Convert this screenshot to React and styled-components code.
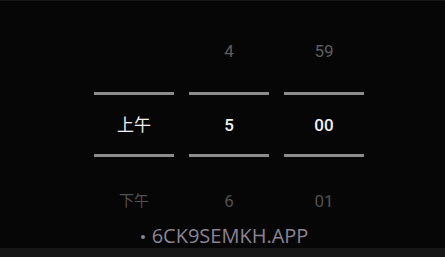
import React from 'react'
import styled, { createGlobalStyle } from 'styled-components'

const GlobalStyle = createGlobalStyle`
  html, body {
    margin: 0;
    padding: 0;
    background: #060606;
  }
`

const Page = styled.div`
  width: 445px;
  height: 257px;
  display: flex;
  flex-direction: column;
  background: #060606;
  overflow: hidden;
`

const TopEdge = styled.div`
  height: 1px;
  background: #171717;
`

const Picker = styled.div`
  display: flex;
  justify-content: center;
  gap: 15px;
  padding-left: 13px;
`

const Column = styled.div`
  width: 80px;
  display: flex;
  flex-direction: column;
  align-items: center;
`

const Cell = styled.div`
  height: 30px;
  line-height: 30px;
  font-family: Roboto, "Noto Sans CJK SC", sans-serif;
  font-size: ${(p) => (p.$cjk && !p.$active ? '15px' : '17px')};
  font-weight: ${(p) => (p.$active && !p.$cjk ? 500 : 400)};
  color: ${(p) => (p.$active ? '#f0f0f0' : p.$dim ? '#515151' : '#5e5e5e')};
`

const Divider = styled.div`
  width: 80px;
  height: 3px;
  background: #8c8c8c;
`

const Caption = styled.div`
  margin-top: 10px;
  height: 20px;
  line-height: 20px;
  display: flex;
  justify-content: center;
  align-items: center;
  gap: 7px;
  padding-left: 4px;
  font-family: "Open Sans", sans-serif;
  font-size: 20px;
  color: #8a8394;
`

const Bullet = styled.span`
  width: 4px;
  height: 4px;
  border-radius: 50%;
  background: #8a8394;
  margin-top: 2px;
`

const BottomEdge = styled.div`
  margin-top: auto;
  height: 9px;
  background: #161616;
`

const columns = [
  { top: '', mid: '上午', bottom: '下午', cjk: true },
  { top: '4', mid: '5', bottom: '6' },
  { top: '59', mid: '00', bottom: '01' },
]

const App = () => (
  <Page>
    <GlobalStyle />
    <TopEdge />
    <Picker>
      {columns.map((c, i) => (
        <Column key={i}>
          <Cell $cjk={c.cjk} style={{ marginTop: 35, marginBottom: 26 }}>
            {c.top}
          </Cell>
          <Divider />
          <Cell $cjk={c.cjk} $active style={{ marginTop: 15, marginBottom: 14 }}>
            {c.mid}
          </Cell>
          <Divider />
          <Cell $cjk={c.cjk} $dim style={{ marginTop: 29 }}>
            {c.bottom}
          </Cell>
        </Column>
      ))}
    </Picker>
    <Caption>
      <Bullet />
      <span>6CK9SEMKH.APP</span>
    </Caption>
    <BottomEdge />
  </Page>
)

export default App
